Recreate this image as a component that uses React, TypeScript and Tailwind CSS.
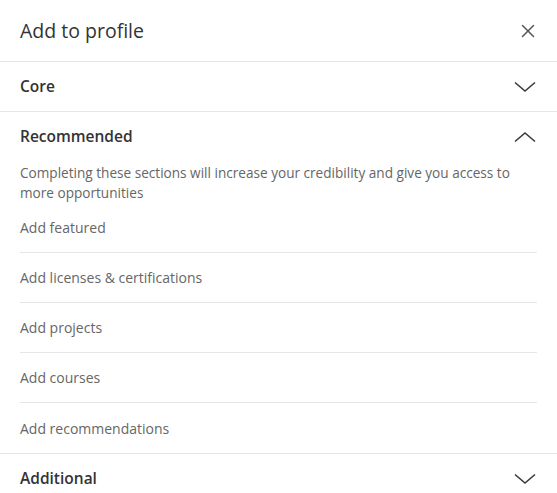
import { X } from 'lucide-react';

const items = [
  'Add featured',
  'Add licenses & certifications',
  'Add projects',
  'Add courses',
  'Add recommendations',
];

function Chevron({ up = false }: { up?: boolean }) {
  return (
    <svg width="24" height="14" viewBox="0 0 24 14" className="text-[#3a3a3a]">
      <path
        d={up ? 'M2 11.5 L12 3 L22 11.5' : 'M2 2.5 L12 11 L22 2.5'}
        fill="none"
        stroke="currentColor"
        strokeWidth="1.6"
      />
    </svg>
  );
}

export default function App() {
  return (
    <div
      className="w-[557px] h-[493px] bg-white overflow-hidden"
      style={{ fontFamily: '"Open Sans", "Noto Sans", sans-serif' }}
    >
      <div className="h-[62px] flex items-center justify-between pl-5 pr-[18px] border-b border-[#e6e6e6]">
        <h2 className="text-[19.5px] text-[#333] font-normal">Add to profile</h2>
        <X size={22} strokeWidth={1.6} className="text-[#555]" />
      </div>

      <div className="h-[50px] flex items-center justify-between pl-5 pr-[20px] border-b border-[#e6e6e6]">
        <span className="text-[15.5px] font-semibold text-[#333]">Core</span>
        <Chevron />
      </div>

      <div className="border-b border-[#e6e6e6]">
        <div className="h-[50px] flex items-center justify-between pl-5 pr-[20px]">
          <span className="text-[15.5px] font-semibold text-[#333]">Recommended</span>
          <Chevron up />
        </div>
        <p className="pl-5 pr-6 text-[13.6px] leading-[20px] text-[#666] mt-px">
          Completing these sections will increase your credibility and give you access to more
          opportunities
        </p>
        <ul className="px-5">
          {items.map((item, i) => (
            <li
              key={item}
              className={`h-[50px] flex items-center text-[14px] text-[#666] ${
                i < items.length - 1 ? 'border-b border-[#e6e6e6]' : ''
              }`}
            >
              {item}
            </li>
          ))}
        </ul>
      </div>

      <div className="h-[50px] flex items-center justify-between pl-5 pr-[20px]">
        <span className="text-[15.5px] font-semibold text-[#333]">Additional</span>
        <Chevron />
      </div>
    </div>
  );
}
